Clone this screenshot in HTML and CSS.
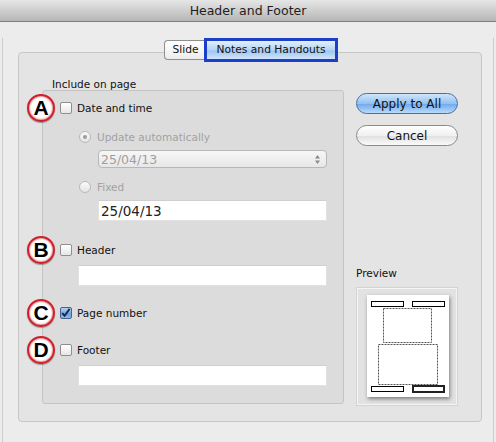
FILE: index.html
```html
<!DOCTYPE html>
<html lang="en">
<head>
    <meta charset="UTF-8">
    <title>Header and Footer</title>
    <link rel="stylesheet" href="styles.css">
</head>
<body>
    <div class="window">
        <div class="titlebar">Header and Footer</div>
        <div class="content">
            <div class="tabs">
                <div class="tab">Slide</div>
                <div class="tab tab-active">Notes and Handouts</div>
            </div>
            <div class="tabbox">
                <div class="left-col">
                    <div class="group-label">Include on page</div>
                    <div class="group">
                        <div class="check-row">
                            <span class="badge">A</span>
                            <span class="box"></span>
                            <span>Date and time</span>
                        </div>
                        <div class="radio-row r-first">
                            <span class="radio radio-on"></span>
                            <span>Update automatically</span>
                        </div>
                        <div class="popup">
                            <span>25/04/13</span>
                            <svg class="stepper" width="7" height="11" viewBox="0 0 7 11">
                                <path d="M3.5 1 L6 4.5 L1 4.5 Z M3.5 10 L6 6.5 L1 6.5 Z" fill="#8a8a8a"/>
                            </svg>
                        </div>
                        <div class="radio-row r-second">
                            <span class="radio"></span>
                            <span>Fixed</span>
                        </div>
                        <div class="field field-date">25/04/13</div>

                        <div class="check-row row-header">
                            <span class="badge">B</span>
                            <span class="box"></span>
                            <span>Header</span>
                        </div>
                        <div class="field field-wide"></div>

                        <div class="check-row row-page">
                            <span class="badge">C</span>
                            <span class="box box-on">
                                <svg width="12" height="12" viewBox="0 0 12 12">
                                    <path d="M2.5 6.2 L5 9 L10.5 1.5" fill="none" stroke="#14274d" stroke-width="2"/>
                                </svg>
                            </span>
                            <span>Page number</span>
                        </div>

                        <div class="check-row row-footer">
                            <span class="badge">D</span>
                            <span class="box"></span>
                            <span>Footer</span>
                        </div>
                        <div class="field field-wide"></div>
                    </div>
                </div>
                <div class="right-col">
                    <button class="btn btn-default">Apply to All</button>
                    <button class="btn">Cancel</button>
                    <div class="preview">
                        <div class="preview-label">Preview</div>
                        <div class="preview-box">
                            <div class="page">
                                <svg width="82" height="102" viewBox="0 0 82 102">
                                    <rect x="4.5" y="6.5" width="32" height="5" fill="none" stroke="#000"/>
                                    <rect x="45.5" y="6.5" width="32" height="5" fill="none" stroke="#000"/>
                                    <rect x="16.5" y="13.5" width="48" height="34" fill="none" stroke="#555" stroke-dasharray="2 1"/>
                                    <rect x="11.5" y="49.5" width="59" height="40" fill="none" stroke="#555" stroke-dasharray="2 1"/>
                                    <rect x="4.5" y="91.5" width="32" height="5" fill="none" stroke="#000"/>
                                    <rect x="46" y="91" width="31" height="6" fill="none" stroke="#222" stroke-width="2"/>
                                </svg>
                            </div>
                        </div>
                    </div>
                </div>
            </div>
        </div>
    </div>
</body>
</html>
```
FILE: styles.css
```css
body {
    margin: 0;
    padding: 0;
    background: #ececec;
    font-family: 'DejaVu Sans', sans-serif;
    font-size: 10.5px;
    color: #111;
}
.window {
    width: 496px;
    height: 442px;
    background: #ececec;
    overflow: hidden;
}
.titlebar {
    height: 21px;
    line-height: 21px;
    text-align: center;
    font-size: 12.5px;
    color: #1e1e1e;
    background: linear-gradient(to bottom, #e6e6e6, #b6b6b6);
    border-bottom: 1px solid #7f7f7f;
}
.content {
    height: 420px;
    margin: 0 2px;
    border-left: 1px solid #cdcdcd;
    border-right: 1px solid #cdcdcd;
}
.tabs {
    display: flex;
    justify-content: center;
    align-items: center;
    margin-top: 16px;
    height: 24px;
    position: relative;
    z-index: 1;
    padding-left: 6px;
}
.tab {
    box-sizing: border-box;
    height: 20px;
    line-height: 18px;
    padding: 0 5px 0 7px;
    border: 1px solid #8e8e8e;
    border-right: none;
    border-radius: 4px 0 0 4px;
    background: linear-gradient(to bottom, #ffffff, #ededed);
    font-size: 10.7px;
}
.tab-active {
    height: 24px;
    line-height: 18px;
    padding: 0 9px 0 10px;
    border: 3px solid #1c3fc8;
    border-radius: 0;
    background: linear-gradient(to bottom, #e3f0fd, #b3d3f5 50%, #9fc6f0 55%, #cfe4fb);
}
.tabbox {
    box-sizing: border-box;
    height: 370px;
    margin: -10px 11px 0 15px;
    border: 1px solid #c7c7c7;
    border-radius: 4px;
    background: #e4e4e4;
    padding: 25px 0 17px 23px;
    display: flex;
    gap: 12px;
}
.left-col {
    width: 302px;
}
.group-label {
    line-height: 12px;
    height: 12px;
    padding-left: 10px;
}
.group {
    box-sizing: border-box;
    height: 314px;
    border: 1px solid #c4c4c4;
    border-radius: 3px;
    background: #dcdcdc;
    padding: 9px 0 0 17px;
}
.check-row, .radio-row {
    display: flex;
    align-items: center;
    height: 16px;
    position: relative;
}
.box {
    box-sizing: border-box;
    width: 12px;
    height: 12px;
    border: 1px solid #8f8f8f;
    border-radius: 2px;
    background: linear-gradient(to bottom, #ffffff, #e6e6e6);
    margin-right: 5px;
    display: flex;
}
.box-on {
    border-color: #47628d;
    background: linear-gradient(to bottom, #b9d4f3, #6e9fdc 60%, #8fb8ea);
}
.box-on svg {
    margin: -1px 0 0 -1px;
}
.badge {
    position: absolute;
    left: -33px;
    top: -6px;
    box-sizing: border-box;
    width: 28px;
    height: 28px;
    border-radius: 50%;
    border: 2px solid #d11f2b;
    background: radial-gradient(circle, #ffffff 55%, #f1d3d3);
    box-shadow: inset 0 0 2px #b0101c, 0 1px 1px rgba(0, 0, 0, 0.35);
    font-family: 'Liberation Sans', Arial, sans-serif;
    font-weight: bold;
    font-size: 21px;
    line-height: 24px;
    text-align: center;
    color: #000;
}
.radio-row {
    margin-left: 19px;
    color: #a2a2a2;
}
.r-first { margin-top: 13px; }
.r-second { margin-top: 11px; }
.radio {
    box-sizing: border-box;
    width: 12px;
    height: 12px;
    border-radius: 50%;
    border: 1px solid #b9b9b9;
    background: linear-gradient(to bottom, #fafafa, #e4e4e4);
    margin-right: 6px;
    display: flex;
    align-items: center;
    justify-content: center;
}
.radio-on::after {
    content: "";
    width: 4px;
    height: 4px;
    border-radius: 50%;
    background: #9c9c9c;
}
.popup {
    box-sizing: border-box;
    width: 229px;
    height: 18px;
    margin: 5px 0 0 38px;
    border: 1px solid #b7b7b7;
    border-radius: 4px;
    background: linear-gradient(to bottom, #f7f7f7, #e7e7e7);
    display: flex;
    align-items: center;
    justify-content: space-between;
    padding: 0 5px 0 2px;
    font-size: 12.5px;
    color: #a0a0a0;
}
.field {
    box-sizing: border-box;
    background: #fff;
    border: 1px solid #e2e2e2;
    border-top-color: #cfcfcf;
}
.field-date {
    width: 229px;
    height: 21px;
    margin: 5px 0 0 38px;
    padding-left: 2px;
    font-size: 13.5px;
    line-height: 20px;
    color: #222;
}
.field-wide {
    width: 249px;
    height: 21px;
    margin: 7px 0 0 18px;
}
.row-header { margin-top: 21px; }
.row-page { margin-top: 19px; }
.row-footer { margin-top: 21px; }
.right-col {
    width: 102px;
    display: flex;
    flex-direction: column;
}
.btn {
    box-sizing: border-box;
    width: 102px;
    height: 21px;
    border-radius: 11px;
    border: 1px solid #8a8a8a;
    background: linear-gradient(to bottom, #ffffff, #f0f0f0 50%, #e2e2e2 55%, #fafafa);
    font-family: 'DejaVu Sans', sans-serif;
    font-size: 12px;
    color: #111;
    padding: 0;
    margin-bottom: 11px;
}
.btn:first-child {
    margin-top: 15px;
}
.btn-default {
    border-color: #4f6c9c;
    background: linear-gradient(to bottom, #d0e5fb, #94c1f0 50%, #75aceb 55%, #b7dafc);
}
.preview {
    margin-top: auto;
    margin-bottom: -2px;
}
.preview-label {
    line-height: 14px;
    margin-bottom: 7px;
    padding-top: 1px;
}
.preview-box {
    box-sizing: border-box;
    height: 119px;
    border: 1px solid #d3d3d3;
    box-shadow: inset 0 0 0 1px #f4f4f4;
    background: #e2e2e2;
    padding: 7px 0 0 10px;
}
.page {
    width: 82px;
    height: 102px;
    background: #fff;
    box-shadow: 1px 2px 4px rgba(0, 0, 0, 0.45);
}
.page svg {
    display: block;
}
```
